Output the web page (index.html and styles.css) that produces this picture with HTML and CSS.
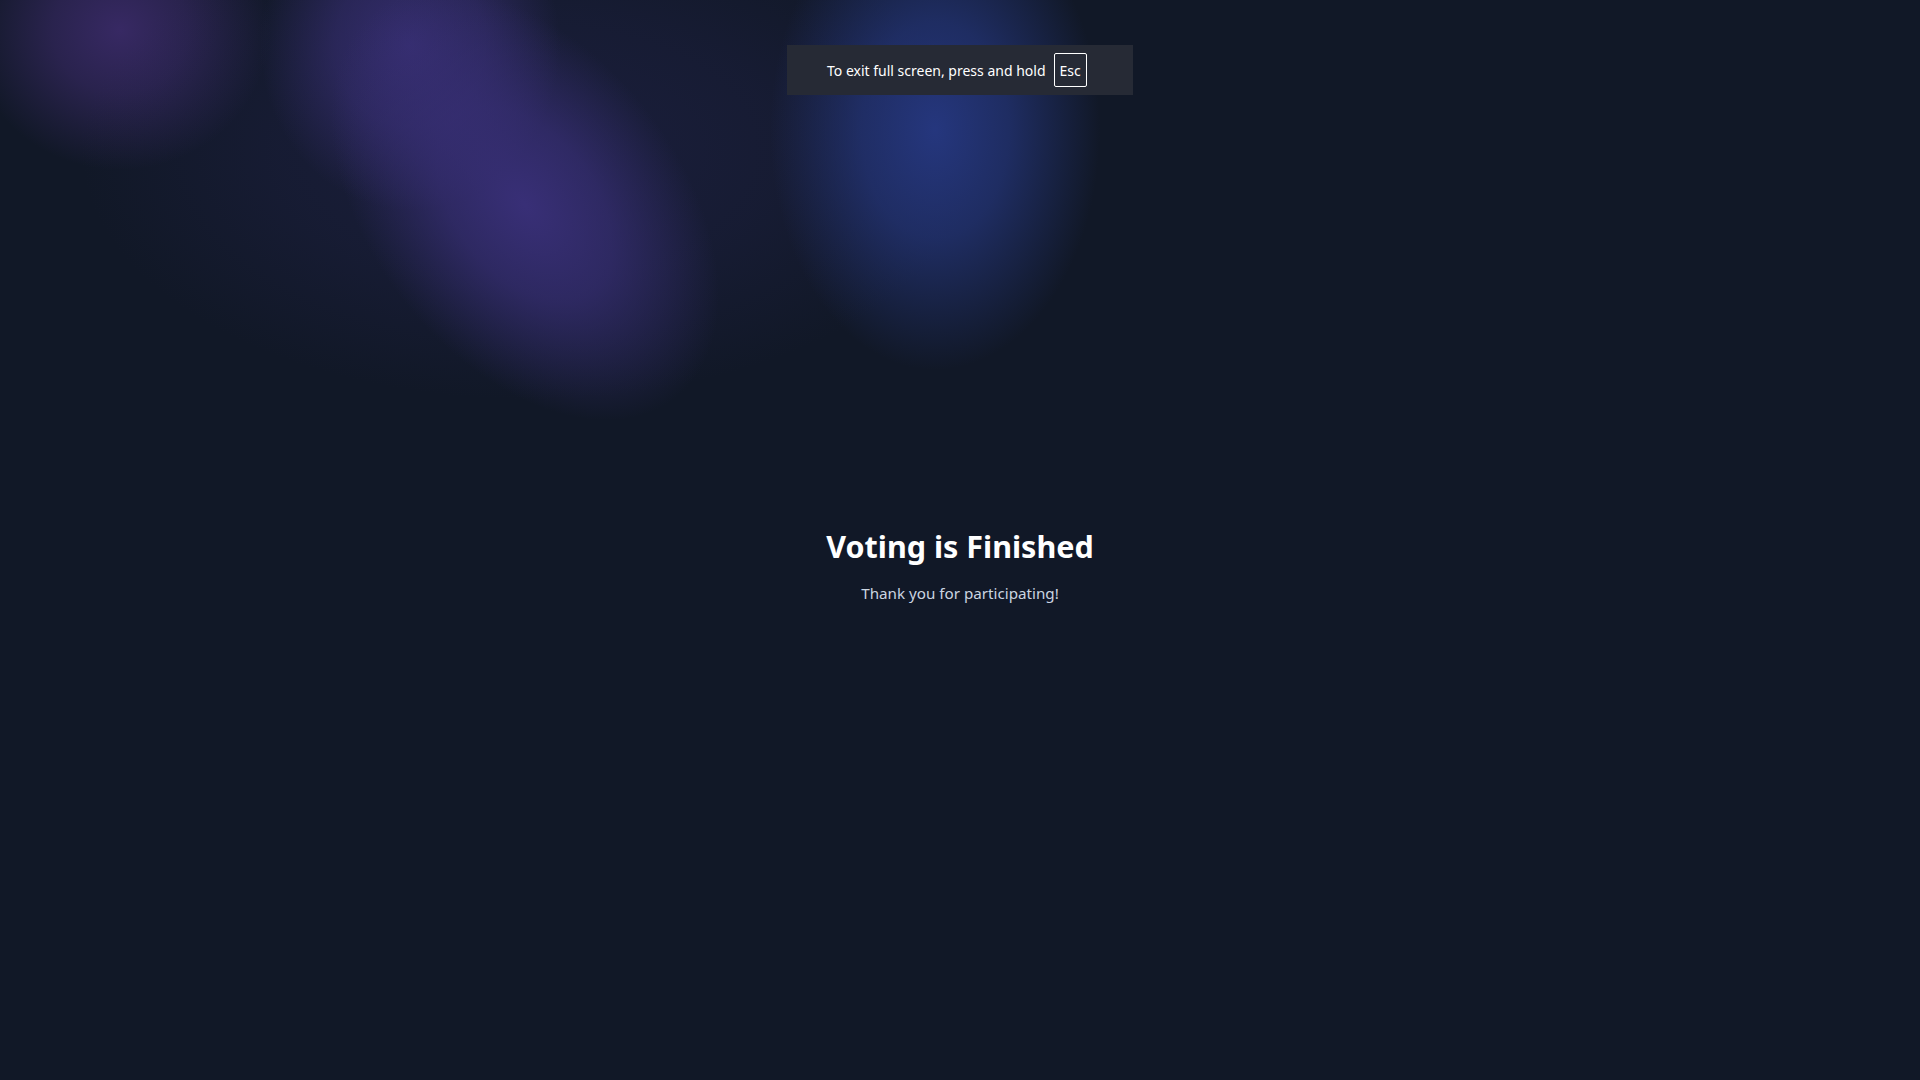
FILE: index.html
```html
<!DOCTYPE html>
<html lang="en">
<head>
<meta charset="utf-8">
<title>Voting is Finished</title>
<link rel="stylesheet" href="styles.css">
</head>
<body>
<div class="backdrop" aria-hidden="true">
  <div class="glow glow-corner"></div>
  <div class="glow glow-haze"></div>
  <div class="glow glow-ribbon-top"></div>
  <div class="glow glow-ribbon"></div>
  <div class="glow glow-blue"></div>
</div>
<main class="screen">
  <h1 class="title">Voting is Finished</h1>
  <p class="subtitle">Thank you for participating!</p>
</main>
<div class="fs-notice">
  <span class="fs-text">To exit full screen, press and hold</span>
  <span class="fs-key">Esc</span>
</div>
</body>
</html>
```
FILE: styles.css
```css
* { box-sizing: border-box; }
html, body {
  margin: 0;
  height: 100%;
  background: #111827;
  overflow: hidden;
}
body {
  font-family: "Noto Sans", "Open Sans", sans-serif;
  color: #fff;
  position: relative;
}
.backdrop {
  position: absolute;
  inset: 0;
  overflow: hidden;
  pointer-events: none;
}
.glow {
  position: absolute;
}
.glow-corner {
  left: -30px;
  top: -110px;
  width: 300px;
  height: 280px;
  background: radial-gradient(closest-side, rgba(62,44,110,0.85) 0%, rgba(62,44,110,0.55) 45%, rgba(62,44,110,0) 100%);
}
.glow-haze {
  left: 80px;
  top: -100px;
  width: 900px;
  height: 500px;
  background: radial-gradient(closest-side, rgba(45,42,100,0.35) 0%, rgba(45,42,100,0.2) 55%, rgba(45,42,100,0) 100%);
}
.glow-ribbon-top {
  left: 260px;
  top: -120px;
  width: 300px;
  height: 330px;
  background: radial-gradient(closest-side, rgba(58,48,120,0.85) 0%, rgba(58,48,120,0.55) 50%, rgba(58,48,120,0) 100%);
}
.glow-ribbon {
  left: 370px;
  top: -40px;
  width: 310px;
  height: 490px;
  transform: rotate(-38deg);
  background: radial-gradient(closest-side, rgba(58,48,122,0.95) 0%, rgba(58,48,122,0.65) 45%, rgba(58,48,122,0) 100%);
}
.glow-blue {
  left: 770px;
  top: -110px;
  width: 330px;
  height: 480px;
  background: radial-gradient(closest-side, rgba(38,56,130,0.95) 0%, rgba(38,56,130,0.65) 45%, rgba(38,56,130,0) 100%);
}
.screen {
  position: relative;
  height: 100%;
  display: flex;
  flex-direction: column;
  align-items: center;
  justify-content: center;
  padding-top: 50px;
}
.title {
  margin: 0;
  font-size: 30.5px;
  line-height: 40px;
  font-weight: 700;
  color: #fff;
}
.subtitle {
  margin: 15px 0 0;
  font-size: 15.2px;
  line-height: 24px;
  color: #cbd5e1;
}
.fs-notice {
  position: absolute;
  left: 787px;
  top: 45px;
  width: 346px;
  height: 50px;
  background: #262a35;
  display: flex;
  align-items: center;
  padding-left: 40px;
  gap: 8px;
  font-size: 14px;
  color: #fff;
}
.fs-key {
  border: 1px solid #fff;
  border-radius: 2px;
  height: 34px;
  padding: 0 5px;
  display: flex;
  align-items: center;
  font-size: 14px;
}
```
